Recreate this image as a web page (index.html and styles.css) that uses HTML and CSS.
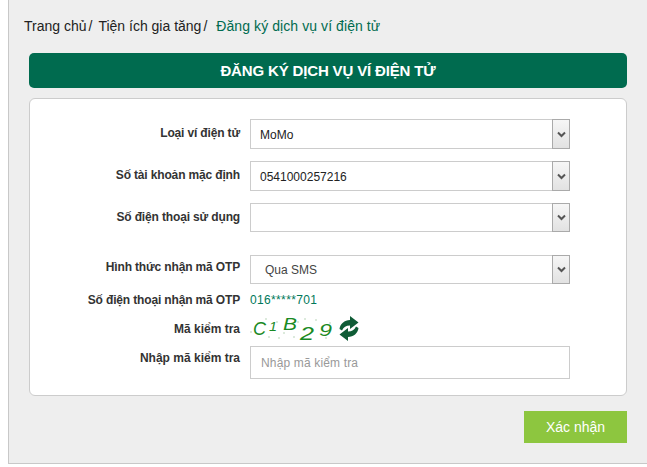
FILE: index.html
```html
<!DOCTYPE html>
<html>

<head>
    <meta charset="utf-8">
    <title>Đăng ký dịch vụ ví điện tử</title>
    <link rel="stylesheet" href="styles.css">
</head>

<body>
    <div class="page">
        <div class="breadcrumb">
            <span class="crumb">Trang chủ</span><span class="sep">/</span>
            <span class="crumb">Tiện ích gia tăng</span><span class="sep">/</span>
            <span class="crumb current">Đăng ký dịch vụ ví điện tử</span>
        </div>

        <h1 class="title">ĐĂNG KÝ DỊCH VỤ VÍ ĐIỆN TỬ</h1>

        <div class="card">
            <div class="row row-select">
                <label>Loại ví điện tử</label>
                <div class="select">
                    <span class="value">MoMo</span>
                    <span class="arrow"><svg width="9" height="7" viewBox="0 0 9 7"><path d="M1 1.5 L4.5 5 L8 1.5" fill="none" stroke="#555" stroke-width="2"/></svg></span>
                </div>
            </div>
            <div class="row row-select">
                <label>Số tài khoản mặc định</label>
                <div class="select">
                    <span class="value">0541000257216</span>
                    <span class="arrow"><svg width="9" height="7" viewBox="0 0 9 7"><path d="M1 1.5 L4.5 5 L8 1.5" fill="none" stroke="#555" stroke-width="2"/></svg></span>
                </div>
            </div>
            <div class="row row-select row-gap">
                <label>Số điện thoại sử dụng</label>
                <div class="select">
                    <span class="value"></span>
                    <span class="arrow"><svg width="9" height="7" viewBox="0 0 9 7"><path d="M1 1.5 L4.5 5 L8 1.5" fill="none" stroke="#555" stroke-width="2"/></svg></span>
                </div>
            </div>
            <div class="row row-select row-otp">
                <label>Hình thức nhận mã OTP</label>
                <div class="select">
                    <span class="value indent">Qua SMS</span>
                    <span class="arrow"><svg width="9" height="7" viewBox="0 0 9 7"><path d="M1 1.5 L4.5 5 L8 1.5" fill="none" stroke="#555" stroke-width="2"/></svg></span>
                </div>
            </div>
            <div class="row row-phone">
                <label>Số điện thoại nhận mã OTP</label>
                <span class="phone">016*****701</span>
            </div>
            <div class="row row-captcha">
                <label>Mã kiểm tra</label>
                <div class="captcha">
                    <svg width="86" height="30" viewBox="0 0 86 30">
                        <g fill="#9ec49e">
                            <circle cx="1" cy="19" r=".7"/><circle cx="8" cy="10" r=".7"/><circle cx="19" cy="24" r=".7"/>
                            <circle cx="27" cy="9" r=".7"/><circle cx="34" cy="20" r=".7"/><circle cx="44" cy="24" r=".7"/>
                            <circle cx="48" cy="9" r=".7"/><circle cx="55" cy="6" r=".7"/><circle cx="66" cy="7" r=".7"/>
                            <circle cx="76" cy="25" r=".7"/><circle cx="41" cy="16" r=".7"/><circle cx="16" cy="6" r=".7"/>
                            <circle cx="62" cy="18" r=".7"/><circle cx="29" cy="25" r=".7"/><circle cx="80" cy="10" r=".7"/>
                        </g>
                        <g fill="#1a8a24" font-family="'Liberation Sans', Arial, sans-serif" font-style="italic">
                            <text x="3" y="22" font-size="18" textLength="13" lengthAdjust="spacingAndGlyphs">C</text>
                            <text x="19" y="18" font-size="13" textLength="8" lengthAdjust="spacingAndGlyphs">1</text>
                            <text x="33" y="17" font-size="16" textLength="14" lengthAdjust="spacingAndGlyphs">B</text>
                            <text x="50" y="27" font-size="18" textLength="14" lengthAdjust="spacingAndGlyphs">2</text>
                            <text x="69" y="23" font-size="16" textLength="13" lengthAdjust="spacingAndGlyphs">9</text>
                        </g>
                    </svg>
                    <svg class="refresh" width="20" height="25" viewBox="0 0 20 25">
                        <path fill="#0f5c36" d="M11 0 L19.5 6.5 L11 13 L11 9.5 C7 9.5 4.5 11 3 14.5 L0.5 13 C1 8 5.5 4 11 4 Z"/>
                        <path fill="#0f5c36" d="M9 25 L0.5 18.5 L9 12 L9 15.5 C13 15.5 15.5 14 17 10.5 L19.5 12 C19 17 14.5 21 9 21 Z"/>
                    </svg>
                </div>
            </div>
            <div class="row row-input">
                <label>Nhập mã kiểm tra</label>
                <input type="text" placeholder="Nhập mã kiểm tra">
            </div>
        </div>

        <div class="actions">
            <button type="button">Xác nhận</button>
        </div>
    </div>
</body>

</html>
```

FILE: styles.css
```css
html,
body {
    margin: 0;
    padding: 0;
    background: white;
}

body {
    font-family: "Liberation Sans", Arial, sans-serif;
    overflow: hidden;
}

.page {
    box-sizing: border-box;
    height: 464px;
    margin-left: 8px;
    padding: 17px 20px 0 20px;
    background: #eeeeee;
    border-left: 1px solid #c8c8c8;
    border-bottom: 1px solid #c8c8c8;
}

.breadcrumb {
    height: 19px;
    margin-left: -5px;
    line-height: 19px;
    font-size: 14px;
    color: #222;
    display: flex;
}

.sep {
    margin: 0 6px 0 2px;
}

.current {
    margin-left: 3px;
    letter-spacing: 0.08px;
    color: #006b4f;
}

.title {
    margin: 17px 0 0 0;
    height: 35px;
    line-height: 35px;
    background: #006b4f;
    border-radius: 5px;
    color: white;
    font-size: 15px;
    font-weight: bold;
    letter-spacing: -0.15px;
    text-align: center;
}

.card {
    box-sizing: border-box;
    height: 298px;
    margin-top: 10px;
    padding-top: 20px;
    background: white;
    border: 1px solid #cccccc;
    border-radius: 6px;
}

.row {
    display: flex;
    gap: 10px;
}

.row label {
    width: 210px;
    flex: none;
    font-size: 12px;
    font-weight: bold;
    letter-spacing: -0.15px;
    color: #333;
    text-align: right;
}

.row-select {
    height: 30px;
    margin-bottom: 12px;
}

.row-select label {
    line-height: 29px;
}

.row-gap {
    height: 29px;
    margin-bottom: 23px;
}

.row-otp {
    height: 29px;
    margin-bottom: 0;
}

.row-otp label {
    line-height: 25px;
}

.select {
    box-sizing: border-box;
    width: 320px;
    display: flex;
    align-items: stretch;
    border: 1px solid #cccccc;
    background: white;
}

.value {
    flex: 1;
    padding-left: 9px;
    font-size: 12px;
    line-height: 30px;
    color: #222;
}

.value.indent {
    padding-left: 14px;
    line-height: 28px;
    color: #444;
}

.arrow {
    box-sizing: border-box;
    width: 18px;
    margin: -1px;
    display: flex;
    align-items: center;
    justify-content: center;
    background: linear-gradient(#f6f6f6, #e2e2e2);
    border: 1px solid #aaaaaa;
}

.row-phone {
    height: 20px;
    margin-top: 7px;
    line-height: 18px;
}

.phone {
    font-size: 12px;
    letter-spacing: 0.35px;
    color: #00795a;
}

.row-captcha {
    height: 30px;
    margin-top: 2px;
    align-items: center;
}

.row-captcha label {
    padding-top: 1px;
    letter-spacing: 0;
}

.captcha {
    display: flex;
    align-items: center;
    gap: 3px;
}

.row-input {
    height: 33px;
    margin-top: 3px;
}

.row-input label {
    padding-top: 2px;
    line-height: 20px;
    letter-spacing: 0;
}

.row-input input {
    box-sizing: border-box;
    width: 320px;
    height: 33px;
    padding: 0 10px;
    border: 1px solid #cccccc;
    font-family: inherit;
    font-size: 12px;
    letter-spacing: 0.15px;
    outline: none;
}

.row-input input::placeholder {
    color: #999;
}

.actions {
    display: flex;
    justify-content: flex-end;
    margin-top: 15px;
}

button {
    width: 103px;
    height: 32px;
    background: #8dc63f;
    color: white;
    border: none;
    font-family: inherit;
    font-size: 14px;
}
```
